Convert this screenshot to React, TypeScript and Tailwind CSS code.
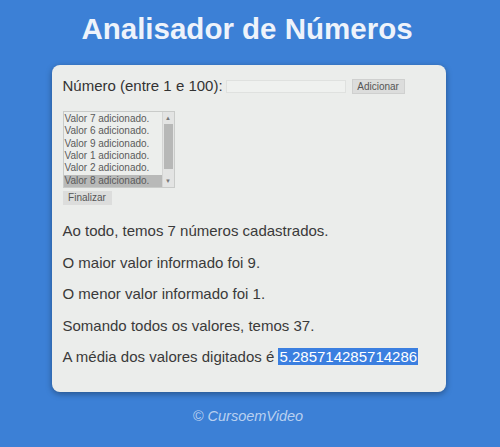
import React from 'react';

const valores = [7, 6, 9, 1, 2, 8];

export default function App() {
  return (
    <div className="w-[500px] h-[447px] bg-[#3c80d6] flex flex-col items-center overflow-hidden" style={{ fontFamily: '"Liberation Sans", Arial, sans-serif' }}>
      <h1 className="mt-[11px] ml-[-6px] text-[29.5px] leading-[35px] font-bold text-[#eef3fb]">
        Analisador de Números
      </h1>

      <div className="mt-[19px] w-[394px] h-[327px] ml-[-3px] bg-[#ebedeb] rounded-[8px] shadow-[0_2px_6px_rgba(0,0,0,0.35)] px-[11px] pt-[12px] text-[#333]">
        <div className="flex items-center text-[15px] leading-[18px]">
          <span>Número (entre 1 e 100):</span>
          <div className="ml-[3px] w-[120px] h-[13px] bg-[#eff1ef] border border-[#dfe1df]" />
          <div className="ml-[6px] w-[53px] h-[15px] bg-[#dcdddc] border border-[#cfd0cf] text-[10px] leading-[13px] text-center text-[#555]">
            Adicionar
          </div>
        </div>

        <div className="mt-[16px] w-[112px] h-[77px] border border-[#c9cbc9] bg-[#eceeec] flex">
          <div className="flex-1 flex flex-col pt-[1px] overflow-hidden">
            {valores.map((v, i) => (
              <div
                key={i}
                className={`h-[12.4px] text-[10px] leading-[12px] pl-[1px] text-[#5a5a5a] whitespace-nowrap ${i === valores.length - 1 ? 'bg-[#b8b9b8]' : ''}`}
              >
                Valor {v} adicionado.
              </div>
            ))}
          </div>
          <div className="w-[12px] shrink-0 flex flex-col items-center bg-[#e3e4e3] border-l border-[#d4d5d4]">
            <div className="h-[12px] text-[6px] leading-[12px] text-[#777]">▲</div>
            <div className="w-[9px] h-[45px] bg-[#b7b8b7]" />
            <div className="mt-auto h-[12px] text-[6px] leading-[12px] text-[#777]">▼</div>
          </div>
        </div>

        <div className="mt-[3px] w-[49px] h-[14px] bg-[#dcdddc] text-[10px] leading-[14px] text-center text-[#555]">
          Finalizar
        </div>

        <div className="mt-[17px] flex flex-col gap-[13.5px] text-[15px] leading-[18px] text-[#3a3a3a]">
          <p>Ao todo, temos 7 números cadastrados.</p>
          <p>O maior valor informado foi 9.</p>
          <p>O menor valor informado foi 1.</p>
          <p>Somando todos os valores, temos 37.</p>
          <p>
            A média dos valores digitados é{' '}
            <span className="bg-[#3b7fe0] text-white px-[1px]">5.285714285714286</span>
          </p>
        </div>
      </div>

      <div className="mt-[14px] text-[14.5px] italic text-[#b9d0f0] ml-[-4px]">© CursoemVideo</div>
    </div>
  );
}
